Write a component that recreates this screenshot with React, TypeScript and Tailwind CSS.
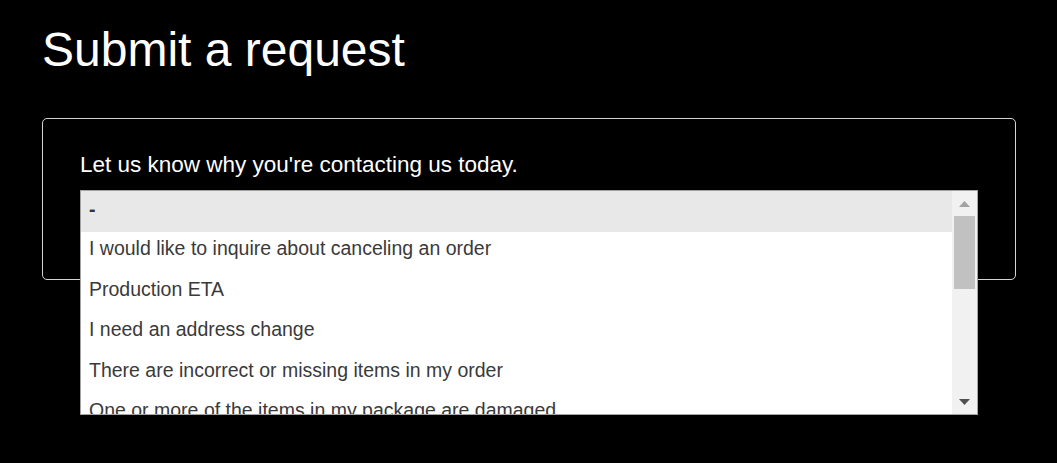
const options = [
  '-',
  'I would like to inquire about canceling an order',
  'Production ETA',
  'I need an address change',
  'There are incorrect or missing items in my order',
  'One or more of the items in my package are damaged',
];

export default function App() {
  return (
    <div className="min-h-screen bg-black px-[42px] pt-[22px] font-['Liberation_Sans',Arial,sans-serif]">
      <h1 className="text-[48px] leading-[55px] font-normal text-white">Submit a request</h1>

      {/* Request form card */}
      <div className="mt-[41px] w-[974px] rounded-[5px] border border-[#d4d4d4] px-[37px] pt-[33px] pb-[37px]">
        <label className="block text-[22.5px] leading-[26px] text-white">
          Let us know why you&apos;re contacting us today.
        </label>

        <div className="relative mt-[12px] h-[52px] bg-white">
          {/* Open dropdown list */}
          <div className="absolute left-0 right-0 top-0 z-10 flex h-[225px] border border-[#a3a3a3] bg-white">
            <ul className="flex-1 overflow-hidden">
              {options.map((opt, i) => (
                <li
                  key={opt}
                  className={
                    i === 0
                      ? 'h-[40.5px] bg-[#e8e8e8] px-[8px] pt-[6.5px] text-[19.5px] leading-[23px] font-bold whitespace-nowrap text-[#333]'
                      : 'h-[40.5px] px-[8px] pt-[5.5px] text-[19.5px] leading-[23px] whitespace-nowrap text-[#3a3a3a]'
                  }
                >
                  {opt}
                </li>
              ))}
            </ul>

            {/* Scrollbar */}
            <div className="flex w-[25px] flex-col bg-[#f1f1f1]">
              <div className="flex h-[25px] items-center justify-center">
                <svg width="11" height="6" viewBox="0 0 11 6">
                  <path d="M5.5 0 L11 6 L0 6 Z" fill="#a3a3a3" />
                </svg>
              </div>
              <div className="mx-[2px] h-[73px] bg-[#c1c1c1]" />
              <div className="flex-1" />
              <div className="flex h-[25px] items-center justify-center">
                <svg width="11" height="6" viewBox="0 0 11 6">
                  <path d="M0 0 L11 0 L5.5 6 Z" fill="#505050" />
                </svg>
              </div>
            </div>
          </div>
        </div>
      </div>
    </div>
  );
}
